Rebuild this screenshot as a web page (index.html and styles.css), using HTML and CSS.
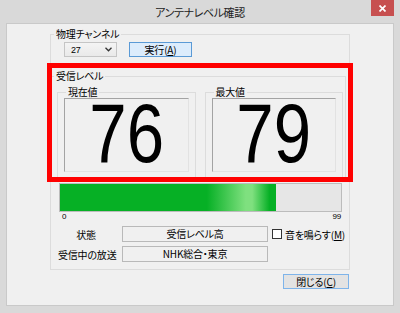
FILE: index.html
```html
<!DOCTYPE html>
<html lang="ja">

<head>
    <meta charset="UTF-8">
    <meta name="viewport" content="width=device-width, initial-scale=1.0">
    <title>アンテナレベル確認</title>
    <link rel="stylesheet" href="styles.css">
</head>

<body>
    <div class="titlebar">
        <span class="title">アンテナレベル確認</span>
        <button class="close-btn" aria-label="閉じる">
            <svg width="7" height="7" viewBox="0 0 7 7">
                <path d="M0.5 0.5 L6.5 6.5 M6.5 0.5 L0.5 6.5" stroke="#fff" stroke-width="1.7" />
            </svg>
        </button>
    </div>

    <div class="client">
        <fieldset class="group group-main">
            <legend>物理チャンネル</legend>
            <div class="channel-row">
                <div class="combo">
                    <span>27</span>
                    <svg width="7" height="5" viewBox="0 0 7 5">
                        <polyline points="0.5,0.8 3.5,3.8 6.5,0.8" fill="none" stroke="#333" stroke-width="1.3" />
                    </svg>
                </div>
                <button class="btn btn-run">実行(<u>A</u>)</button>
            </div>

            <fieldset class="group group-level">
                <legend>受信レベル</legend>
                <div class="meters">
                    <fieldset class="group meter">
                        <legend>現在値</legend>
                        <div class="display"><span class="digits">76</span></div>
                    </fieldset>
                    <fieldset class="group meter">
                        <legend>最大値</legend>
                        <div class="display"><span class="digits">79</span></div>
                    </fieldset>
                </div>
            </fieldset>

            <div class="bar">
                <div class="bar-fill" style="width: 76.8%"></div>
            </div>
            <div class="scale">
                <span>0</span>
                <span>99</span>
            </div>

            <div class="info">
                <span class="info-label">状態</span>
                <div class="field">受信レベル高</div>
                <label class="check">
                    <span class="check-box"></span>
                    <span>音を鳴らす(<u>M</u>)</span>
                </label>

                <span class="info-label">受信中の放送</span>
                <div class="field">NHK総合・東京</div>
            </div>
        </fieldset>

        <div class="footer">
            <button class="btn btn-close">閉じる(<u>C</u>)</button>
        </div>
    </div>

    <!-- red annotation frame -->
    <div class="highlight"></div>
</body>

</html>
```

FILE: styles.css
```css
* {
    box-sizing: border-box;
    margin: 0;
    padding: 0;
}

body {
    position: relative;
    width: 400px;
    height: 313px;
    overflow: hidden;
    display: flex;
    flex-direction: column;
    background: #d9d9d9;
    font-family: "Noto Sans CJK JP", sans-serif;
    font-size: 10px;
    letter-spacing: -0.2px;
    font-feature-settings: "palt";
    color: #000;
}

/* title bar */
.titlebar {
    height: 23px;
    display: grid;
    grid-template-columns: 1fr auto 1fr;
    align-items: start;
}

.title {
    grid-column: 2;
    padding-top: 4px;
    font-size: 11px;
    letter-spacing: -0.4px;
    line-height: 16px;
    color: #222;
}

.close-btn {
    grid-column: 3;
    justify-self: end;
    width: 23px;
    height: 16px;
    margin: 0 6px 0 0;
    border: none;
    background: #c75050;
    display: flex;
    align-items: center;
    justify-content: center;
}

/* client area */
.client {
    flex: 1;
    margin: 0 6px 7px;
    padding: 4px 43px 0;
    background: #f0f0f0;
    border: 1px solid #c9c9c9;
}

.group {
    border: 1px solid #dcdcdc;
    min-width: 0;
}

.group legend {
    margin-left: 3px;
    padding: 0 2px;
    line-height: 12px;
    font-size: 10px;
}

.group-main {
    padding: 0 0 7px;
}

.channel-row {
    display: flex;
    align-items: center;
    gap: 12px;
    padding: 2px 0 0 13px;
}

.combo {
    width: 53px;
    height: 15px;
    display: flex;
    align-items: center;
    justify-content: space-between;
    padding: 0 4px 0 6px;
    border: 1px solid #c5c5c5;
    background: linear-gradient(#f4f4f4, #e9e9e9);
    font-family: "Liberation Sans", Arial, sans-serif;
    font-size: 9px;
}

.btn {
    height: 15px;
    font-family: inherit;
    font-size: 10px;
    letter-spacing: -0.2px;
    font-feature-settings: "palt";
    line-height: 13px;
    color: #000;
}

.btn-run {
    width: 63px;
    border: 1px solid #5a9ad6;
    background: #dcecfc;
}

/* receive level */
.group-level {
    margin: 13px 3px 0 0;
    padding: 0;
}

.group-level legend {
    margin-left: 2px;
}

.meters {
    display: flex;
    gap: 9px;
    padding: 4px 2px 2px 5px;
}

.meter {
    width: 139px;
    padding: 0 6px 5px;
}

.display {
    height: 74px;
    display: flex;
    align-items: flex-start;
    justify-content: center;
    padding-top: 4px;
    border: 1px solid;
    border-color: #a3a3a3 #e2e2e2 #e2e2e2 #a3a3a3;
}

.digits {
    font-family: "Liberation Sans", Arial, sans-serif;
    font-size: 84px;
    line-height: 60px;
    letter-spacing: 0;
    transform: scaleX(0.8);
}

/* progress bar */
.bar {
    height: 29px;
    margin: 2px 7px 0 8px;
    border: 1px solid #bcbcbc;
    background: #e6e6e6;
}

.bar-fill {
    height: 100%;
    background: linear-gradient(90deg, #06b025 0%, #06b025 68%, #7fe07f 86%, #7fe07f 89%, #06b025 97%, #06b025 100%);
}

.scale {
    display: flex;
    justify-content: space-between;
    padding: 0 8px 0 11px;
    font-family: "Liberation Sans", Arial, sans-serif;
    font-size: 8px;
    line-height: 9px;
    height: 9px;
}

.info {
    display: grid;
    grid-template-columns: 56px 146px 1fr;
    column-gap: 8px;
    row-gap: 4px;
    margin-top: 5px;
    padding-left: 7px;
    align-items: center;
}

.info-label {
    text-align: center;
    white-space: nowrap;
}

.field {
    height: 16px;
    border: 1px solid #b9b9b9;
    background: #f0f0f0;
    text-align: center;
    line-height: 14px;
}

.check {
    display: flex;
    align-items: center;
    gap: 3px;
    margin-left: -4px;
    white-space: nowrap;
}

.check-box {
    width: 10px;
    height: 10px;
    border: 1px solid #333;
    background: #fff;
}

/* footer */
.footer {
    display: flex;
    justify-content: flex-end;
    margin-top: 4px;
    padding-right: 1px;
}

.btn-close {
    width: 66px;
    border: 1px solid #7eb4ea;
    background: #e3e3e3;
}

.highlight {
    position: absolute;
    left: 47px;
    top: 63px;
    width: 306px;
    height: 119px;
    border: 5px solid #ff0000;
}
```
